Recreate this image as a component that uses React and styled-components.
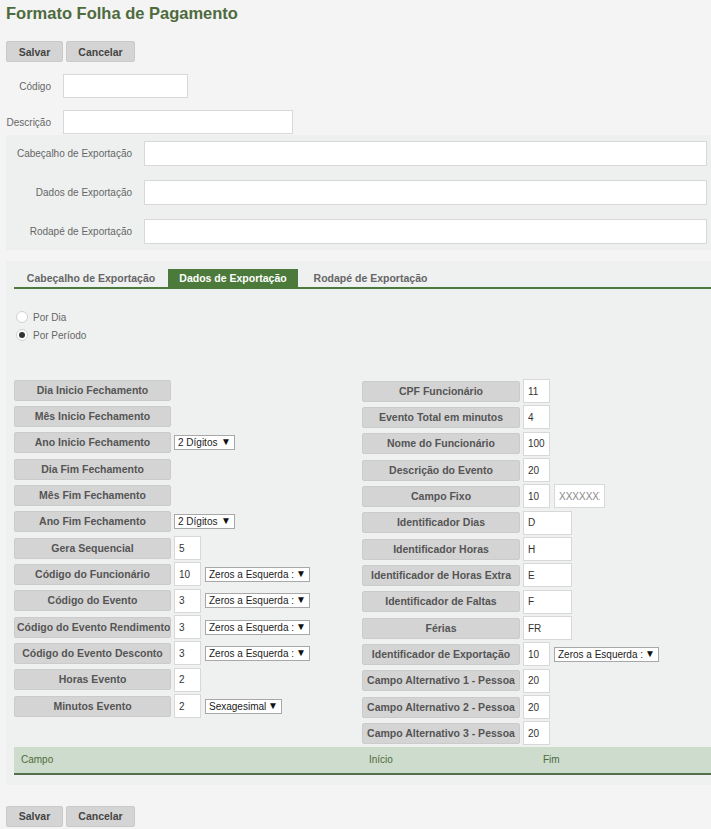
import React from 'react';
import styled, { createGlobalStyle } from 'styled-components';

const FONT = '"Liberation Sans", Arial, sans-serif';

const GlobalStyle = createGlobalStyle`
  html, body { margin: 0; padding: 0; background: #f4f4f4; overflow: hidden; }
  body { font-family: ${FONT}; font-size: 10px; color: #555; }
  * { box-sizing: border-box; }
`;

const Page = styled.div`
  width: 711px;
  height: 829px;
  overflow: hidden;
  padding-left: 6px;
`;

const Title = styled.h1`
  margin: 0;
  height: 26px;
  line-height: 26px;
  font-size: 16.5px;
  font-weight: bold;
  color: #4e6b3e;
  white-space: nowrap;
`;

const ButtonBar = styled.div`
  display: flex;
  gap: 3px;
  margin-top: ${(p) => p.$top}px;
`;

const ActionButton = styled.button`
  width: ${(p) => p.$w}px;
  height: 21px;
  padding: 0;
  border: 1px solid #c9c9c9;
  border-radius: 2px;
  background: #d4d4d4;
  font-family: ${FONT};
  font-size: 10.5px;
  font-weight: bold;
  color: #444;
`;

const TopForm = styled.div`
  display: grid;
  grid-template-columns: 43px auto;
  justify-content: start;
  column-gap: 12px;
  row-gap: 12px;
  align-items: center;
  margin-top: 12px;
  padding-left: 2px;
`;

const FormLabel = styled.label`
  display: flex;
  justify-content: flex-end;
  white-space: nowrap;
  color: #666;
  font-size: 10px;
`;

const TextInput = styled.input`
  width: ${(p) => (p.$w ? `${p.$w}px` : '100%')};
  height: ${(p) => p.$h || 24}px;
  border: 1px solid #d8d8d8;
  background: #fff;
  font-family: ${FONT};
  font-size: 10px;
  color: ${(p) => (p.$muted ? '#888' : '#333')};
  padding: 0 4px;
  outline: none;
  border-radius: 0;
  margin: 0;
  margin-left: ${(p) => p.$gap || 0}px;
`;

const ExportPanel = styled.div`
  width: 705px;
  margin-top: 1px;
  background: #eef0ef;
  padding: 6px 4px 6px 13px;
  display: grid;
  grid-template-columns: 113px 1fr;
  column-gap: 12px;
  row-gap: 14px;
  align-items: center;
`;

const TabPanel = styled.div`
  width: 705px;
  margin-top: 11px;
  background: #eff1f0;
  padding: 8px 0 10px 8px;
`;

const TabBar = styled.div`
  display: flex;
  border-bottom: 2px solid #4b7a3b;
`;

const Tab = styled.div`
  width: ${(p) => p.$w}px;
  height: 18px;
  line-height: 18px;
  text-align: center;
  font-size: 10.5px;
  font-weight: bold;
  white-space: nowrap;
  color: ${(p) => (p.$active ? '#fff' : '#666')};
  background: ${(p) => (p.$active ? '#4b7a3b' : 'transparent')};
`;

const RadioGroup = styled.div`
  margin-top: 19px;
  display: flex;
  flex-direction: column;
`;

const RadioRow = styled.label`
  display: flex;
  align-items: center;
  height: 18px;
  gap: 5px;
  padding-left: 2px;
  color: #666;
  font-size: 10px;
`;

const RadioDot = styled.span`
  width: 12px;
  height: 12px;
  border-radius: 50%;
  border: 1px solid #d0d0d0;
  background: #fff;
  display: flex;
  align-items: center;
  justify-content: center;
  &::after {
    content: '';
    width: 6px;
    height: 6px;
    border-radius: 50%;
    background: ${(p) => (p.$checked ? '#333' : 'transparent')};
  }
`;

const FieldGrid = styled.div`
  margin-top: 33px;
  display: grid;
  grid-template-columns: 348px 1fr;
`;

const FieldColumn = styled.div`
  display: flex;
  flex-direction: column;
  padding-top: ${(p) => p.$offset || 0}px;
`;

const FieldRow = styled.div`
  display: flex;
  align-items: center;
  gap: 3px;
  height: 26.33px;
`;

const FieldTag = styled.div`
  flex: none;
  width: ${(p) => p.$w || 157}px;
  height: 21px;
  line-height: 19px;
  border: 1px solid #cbcbcb;
  border-radius: 2px;
  background: #d4d4d4;
  text-align: center;
  font-size: 10.5px;
  font-weight: bold;
  color: #555;
  white-space: nowrap;
  overflow: hidden;
  padding: 0 2px;
`;

const SelectWrap = styled.span`
  position: relative;
  display: inline-block;
  flex: none;
  width: ${(p) => p.$w}px;
  height: 15px;
  margin-left: ${(p) => p.$gap || 0}px;
`;

const Select = styled.select`
  appearance: none;
  -webkit-appearance: none;
  width: 100%;
  height: 100%;
  border: 1px solid #a8a8a8;
  border-radius: 0;
  background: #fff;
  font-family: ${FONT};
  font-size: 10px;
  color: #222;
  padding: 0 14px 0 3px;
  margin: 0;
  outline: none;
  line-height: 13px;
`;

const SelectArrow = styled.span`
  position: absolute;
  right: 4px;
  top: 1px;
  font-size: 10px;
  line-height: 11px;
  color: #111;
  pointer-events: none;
`;

const TableHeader = styled.div`
  height: 28px;
  display: grid;
  grid-template-columns: 348px 174px 1fr;
  align-items: center;
  padding-left: 7px;
  background: #cedccd;
  border-bottom: 2px solid #55704d;
  color: #4d6b3c;
  font-size: 10px;
`;

const DropDown = ({ w, gap, value }) => (
  <SelectWrap $w={w} $gap={gap}>
    <Select defaultValue={value}>
      <option>{value}</option>
    </Select>
    <SelectArrow>▼</SelectArrow>
  </SelectWrap>
);

const ZEROS = 'Zeros a Esquerda : Adicionar';

const leftFields = [
  { label: 'Dia Inicio Fechamento' },
  { label: 'Mês Inicio Fechamento' },
  { label: 'Ano Inicio Fechamento', select: { w: 61, value: '2 Dígitos' } },
  { label: 'Dia Fim Fechamento' },
  { label: 'Mês Fim Fechamento' },
  { label: 'Ano Fim Fechamento', select: { w: 61, value: '2 Dígitos' } },
  { label: 'Gera Sequencial', input: '5' },
  { label: 'Código do Funcionário', input: '10', select: { w: 105, value: ZEROS } },
  { label: 'Código do Evento', input: '3', select: { w: 105, value: ZEROS } },
  { label: 'Código do Evento Rendimento', input: '3', select: { w: 105, value: ZEROS } },
  { label: 'Código do Evento Desconto', input: '3', select: { w: 105, value: ZEROS } },
  { label: 'Horas Evento', input: '2' },
  { label: 'Minutos Evento', input: '2', select: { w: 77, value: 'Sexagesimal' } },
];

const rightFields = [
  { label: 'CPF Funcionário', input: '11' },
  { label: 'Evento Total em minutos', input: '4' },
  { label: 'Nome do Funcionário', input: '100' },
  { label: 'Descrição do Evento', input: '20' },
  { label: 'Campo Fixo', input: '10', extra: 'XXXXXXXXXX' },
  { label: 'Identificador Dias', input: 'D', wide: true },
  { label: 'Identificador Horas', input: 'H', wide: true },
  { label: 'Identificador de Horas Extra', input: 'E', wide: true },
  { label: 'Identificador de Faltas', input: 'F', wide: true },
  { label: 'Férias', input: 'FR', wide: true },
  { label: 'Identificador de Exportação', input: '10', select: { w: 105, value: ZEROS } },
  { label: 'Campo Alternativo 1 - Pessoa', input: '20' },
  { label: 'Campo Alternativo 2 - Pessoa', input: '20' },
  { label: 'Campo Alternativo 3 - Pessoa', input: '20' },
];

const Field = ({ f, tagW }) => (
  <FieldRow>
    <FieldTag $w={tagW}>{f.label}</FieldTag>
    {f.input !== undefined && <TextInput $w={f.wide ? 49 : 27} defaultValue={f.input} />}
    {f.extra && <TextInput $w={51} $gap={1} $muted defaultValue={f.extra} />}
    {f.select && <DropDown w={f.select.w} value={f.select.value} gap={f.input !== undefined ? 1 : 0} />}
  </FieldRow>
);

export default function App() {
  return (
    <Page>
      <GlobalStyle />
      <Title>Formato Folha de Pagamento</Title>
      <ButtonBar $top={15}>
        <ActionButton $w={57}>Salvar</ActionButton>
        <ActionButton $w={69}>Cancelar</ActionButton>
      </ButtonBar>

      <TopForm>
        <FormLabel>Código</FormLabel>
        <TextInput $w={125} />
        <FormLabel>Descrição</FormLabel>
        <TextInput $w={230} />
      </TopForm>

      <ExportPanel>
        <FormLabel>Cabeçalho de Exportação</FormLabel>
        <TextInput $h={25} />
        <FormLabel>Dados de Exportação</FormLabel>
        <TextInput $h={25} />
        <FormLabel>Rodapé de Exportação</FormLabel>
        <TextInput $h={25} />
      </ExportPanel>

      <TabPanel>
        <TabBar>
          <Tab $w={154}>Cabeçalho de Exportação</Tab>
          <Tab $w={130} $active>Dados de Exportação</Tab>
          <Tab $w={145}>Rodapé de Exportação</Tab>
        </TabBar>

        <RadioGroup>
          <RadioRow><RadioDot />Por Dia</RadioRow>
          <RadioRow><RadioDot $checked />Por Período</RadioRow>
        </RadioGroup>

        <FieldGrid>
          <FieldColumn>
            {leftFields.map((f) => <Field key={f.label} f={f} tagW={157} />)}
          </FieldColumn>
          <FieldColumn $offset={1}>
            {rightFields.map((f) => <Field key={f.label} f={f} tagW={158} />)}
          </FieldColumn>
        </FieldGrid>

        <TableHeader>
          <span>Campo</span>
          <span>Início</span>
          <span>Fim</span>
        </TableHeader>
      </TabPanel>

      <ButtonBar $top={21}>
        <ActionButton $w={57}>Salvar</ActionButton>
        <ActionButton $w={69}>Cancelar</ActionButton>
      </ButtonBar>
    </Page>
  );
}
